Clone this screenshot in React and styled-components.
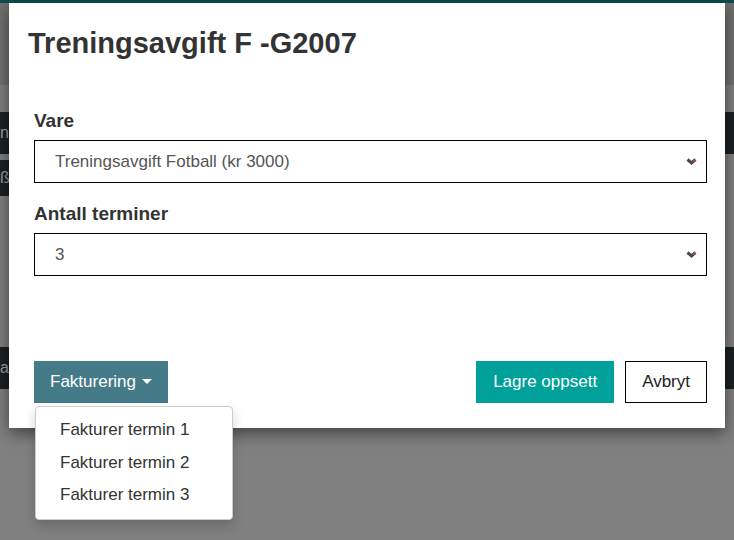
import styled, { createGlobalStyle } from "styled-components";

const GlobalStyle = createGlobalStyle`
  html, body {
    margin: 0;
    padding: 0;
    background: #808080;
    font-family: "Liberation Sans", Arial, sans-serif;
  }
`;

// the page behind the modal, already dimmed by the backdrop
const Page = styled.div`
  position: relative;
  width: 734px;
  height: 540px;
  overflow: hidden;
  background: #808080;
  display: flex;
  flex-direction: column;
`;

const PageHeader = styled.div`
  height: 82px;
  background: #707070;
  border-top: 3px solid #0c4f4c;
`;

const PageRow = styled.div`
  height: ${(p) => p.h}px;
  width: ${(p) => p.w || "100%"};
  margin-top: ${(p) => p.gap || 0}px;
  background: ${(p) => (p.dark ? "#1b2125" : "transparent")};
  color: #9aa0a4;
  font-size: 16px;
  line-height: ${(p) => p.h}px;
  white-space: nowrap;
`;

const Modal = styled.div`
  position: absolute;
  left: 9px;
  top: 3px;
  width: 716px;
  height: 425px;
  background: #fff;
  box-shadow: 0 5px 15px rgba(0, 0, 0, 0.5);
  display: flex;
  flex-direction: column;
`;

const Title = styled.h4`
  margin: 0;
  padding: 24px 19px 0;
  font-size: 29px;
  font-weight: 700;
  color: #333;
  line-height: 32px;
`;

const Body = styled.div`
  padding: 51px 18px 0 25px;
  display: flex;
  flex-direction: column;
`;

const Label = styled.label`
  font-size: 19px;
  font-weight: 700;
  color: #333;
  line-height: 22px;
  margin-top: ${(p) => p.top || 0}px;
  margin-bottom: 8px;
`;

const SelectBox = styled.div`
  height: 41px;
  border: 1px solid #000;
  display: flex;
  align-items: center;
  justify-content: space-between;
  padding: 0 9px 0 20px;
  font-size: 17px;
  color: #555;
`;

const Footer = styled.div`
  margin-top: auto;
  padding: 0 18px 25px 25px;
  display: flex;
  align-items: center;
  gap: 11px;
`;

const Button = styled.button`
  height: 42px;
  padding: 0 ${(p) => p.px || 16}px;
  font-family: inherit;
  font-size: 17px;
  border: ${(p) => (p.outline ? "1px solid #000" : "none")};
  background: ${(p) => p.bg || "#fff"};
  color: ${(p) => (p.outline ? "#222" : "#fff")};
  display: flex;
  align-items: center;
  gap: 6px;
  cursor: pointer;
`;

const Spacer = styled.div`
  flex: 1;
`;

const Menu = styled.ul`
  position: absolute;
  left: 35px;
  top: 406px;
  width: 198px;
  margin: 0;
  padding: 7px 0 7px;
  list-style: none;
  background: #fff;
  border: 1px solid #ccc;
  border-radius: 4px;
  box-shadow: 0 6px 12px rgba(0, 0, 0, 0.175);
  box-sizing: border-box;
`;

const MenuItem = styled.li`
  padding: 0 24px;
  height: 32.5px;
  line-height: 32px;
  font-size: 17px;
  color: #333;
`;

const Chevron = () => (
  <svg width="11" height="7" viewBox="0 0 11 7">
    <path d="M1.5 1.5 L5.5 5 L9.5 1.5" fill="none" stroke="#4a4a4a" strokeWidth="3" strokeLinejoin="miter" />
    <path d="M7.5 3.5 L9 2" stroke="#e8444a" strokeWidth="1.2" />
  </svg>
);

const Caret = () => (
  <svg width="10" height="6" viewBox="0 0 10 6">
    <path d="M0 0 L10 0 L5 5 Z" fill="#fff" />
  </svg>
);

export default function App() {
  return (
    <>
      <GlobalStyle />
      <Page>
        <PageHeader />
        <PageRow h={27} />
        <PageRow h={42} dark>ne</PageRow>
        <PageRow h={36} gap={6} w="60px" dark>ß</PageRow>
        <PageRow h={151} />
        <PageRow h={42} dark>ap</PageRow>

        <Modal>
          <Title>Treningsavgift F -G2007</Title>
          <Body>
            <Label>Vare</Label>
            <SelectBox>
              Treningsavgift Fotball (kr 3000)
              <Chevron />
            </SelectBox>
            <Label top={20}>Antall terminer</Label>
            <SelectBox>
              3
              <Chevron />
            </SelectBox>
          </Body>
          <Footer>
            <Button bg="#457b88">
              Fakturering <Caret />
            </Button>
            <Spacer />
            <Button bg="#00a19a" px={17}>Lagre oppsett</Button>
            <Button outline px={16}>Avbryt</Button>
          </Footer>
        </Modal>

        <Menu>
          <MenuItem>Fakturer termin 1</MenuItem>
          <MenuItem>Fakturer termin 2</MenuItem>
          <MenuItem>Fakturer termin 3</MenuItem>
        </Menu>
      </Page>
    </>
  );
}
